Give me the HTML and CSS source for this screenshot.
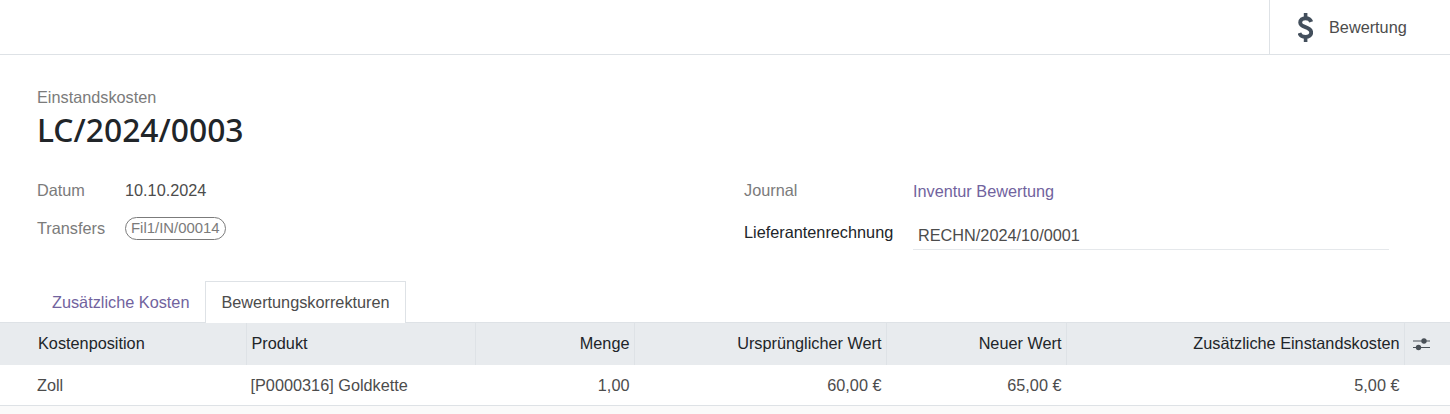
FILE: index.html
```html
<!DOCTYPE html>
<html lang="de">
<head>
  <meta charset="UTF-8" />
  <title>LC/2024/0003</title>
  <link rel="stylesheet" href="styles.css">
</head>
<body>
  <div class="button-box">
    <div class="stat-btn">
      <svg class="stat-icon" viewBox="0 0 15 29" width="15" height="29">
        <path d="M5.8 0h3.6v4h-3.6zM5.8 25h3.6v4h-3.6z" class="dollar-bar"/>
        <path d="M13.2 8.8C12.4 6.4 10.4 5.2 7.6 5.2 4.4 5.2 2.2 6.9 2.2 9.6c0 5.8 11 3.4 11 10 0 2.7-2.3 4.3-5.6 4.3-3.1 0-5.4-1.3-6.2-3.9" class="dollar-s"/>
      </svg>
      <span>Bewertung</span>
    </div>
  </div>

  <div class="sheet">
    <div class="title-label">Einstandskosten</div>
    <h1>LC/2024/0003</h1>

    <div class="groups">
      <div class="group group-left">
        <div class="field">
          <span class="label">Datum</span>
          <span class="value">10.10.2024</span>
        </div>
        <div class="field">
          <span class="label">Transfers</span>
          <span class="tag">Fil1/IN/00014</span>
        </div>
      </div>
      <div class="group group-right">
        <div class="field">
          <span class="label">Journal</span>
          <a class="link">Inventur Bewertung</a>
        </div>
        <div class="field field-input">
          <span class="label label-strong">Lieferantenrechnung</span>
          <div class="input">RECHN/2024/10/0001</div>
        </div>
      </div>
    </div>
  </div>

  <ul class="tabs">
    <li class="tab">Zusätzliche Kosten</li>
    <li class="tab active">Bewertungskorrekturen</li>
  </ul>

  <table class="lines">
    <colgroup>
      <col class="c-cost"><col class="c-product"><col class="c-qty"><col class="c-old"><col class="c-new"><col class="c-add"><col class="c-opt">
    </colgroup>
    <thead>
      <tr>
        <th>Kostenposition</th>
        <th>Produkt</th>
        <th class="num">Menge</th>
        <th class="num">Ursprünglicher Wert</th>
        <th class="num">Neuer Wert</th>
        <th class="num">Zusätzliche Einstandskosten</th>
        <th class="opt">
          <svg viewBox="0 0 17 14" width="17" height="14">
            <path d="M0 4h17M0 10.5h17" stroke="#495057" stroke-width="1.2"/>
            <circle cx="11" cy="4" r="2.7" fill="#495057"/>
            <circle cx="5.5" cy="10.5" r="2.7" fill="#495057"/>
          </svg>
        </th>
      </tr>
    </thead>
    <tbody>
      <tr>
        <td>Zoll</td>
        <td>[P0000316] Goldkette</td>
        <td class="num">1,00</td>
        <td class="num">60,00 €</td>
        <td class="num">65,00 €</td>
        <td class="num">5,00 €</td>
        <td></td>
      </tr>
    </tbody>
  </table>
</body>
</html>
```

FILE: styles.css
```css
html, body {
  height: 100%;
}
body {
  margin: 0;
  background: #fafafa;
  font-family: "Liberation Sans", Arial, sans-serif;
  font-size: 16.27px;
  color: #4c4c4c;
  overflow: hidden;
}
.button-box {
  display: flex;
  justify-content: flex-end;
  height: 54px;
  padding-right: 21px;
  background: #fff;
  border-bottom: 1px solid #dee2e6;
}
.stat-btn {
  display: flex;
  align-items: center;
  width: 160px;
  box-sizing: border-box;
  padding-left: 28px;
  border-left: 1px solid #dee2e6;
}
.stat-icon {
  margin-right: 16px;
}
.dollar-bar {
  fill: #434f5c;
}
.dollar-s {
  fill: none;
  stroke: #434f5c;
  stroke-width: 3.9;
}
.sheet {
  background: #fff;
  padding: 34px 37px 0;
  height: 192px;
}
.title-label {
  color: #7b7b7b;
  line-height: 17px;
}
h1 {
  margin: 3px 0 0;
  font-family: "Noto Sans", sans-serif;
  font-size: 31.8px;
  line-height: 42px;
  font-weight: 500;
  color: #212529;
}
.groups {
  display: flex;
  margin-top: 20px;
}
.group-left {
  width: 707px;
}
.group-right {
  width: 645px;
}
.field {
  display: flex;
  align-items: center;
  height: 38px;
}
.label {
  color: #7b7b7b;
  width: 88px;
}
.group-right .label {
  width: 169px;
}
.label-strong {
  color: #212529;
}
.value {
  color: #4c4c4c;
}
.link {
  padding-top: 2px;
  color: #71639e;
}
.tag {
  padding: 0 5px;
  line-height: 21px;
  border: 1px solid #7b7b7b;
  border-radius: 12px;
  color: #7b7b7b;
  font-size: 14.9px;
}
.field-input {
  margin-top: 4px;
}
.input {
  flex: 1;
  box-sizing: border-box;
  height: 31px;
  line-height: 32px;
  padding-left: 5px;
  border-bottom: 1px solid #e5e8eb;
  margin-top: 4px;
}
.tabs {
  display: flex;
  margin: 0;
  padding: 0 0 0 36px;
  list-style: none;
  background: #fff;
  height: 41px;
  border-bottom: 1px solid #dee2e6;
}
.tab {
  height: 41px;
  box-sizing: border-box;
  padding: 0 15px;
  line-height: 40px;
  color: #71639e;
  border: 1px solid transparent;
  border-bottom: 0;
}
.tab.active {
  height: 42px;
  color: #4c4c4c;
  background: #fff;
  border-color: #dee2e6;
}
.lines {
  width: 100%;
  table-layout: fixed;
  border-collapse: collapse;
  background: #fff;
}
.c-cost { width: 246px; }
.c-product { width: 229px; }
.c-qty { width: 159px; }
.c-old { width: 252px; }
.c-new { width: 180px; }
.c-add { width: 338px; }
th {
  height: 40px;
  padding: 0 4px 2px;
  background: #e8ebee;
  color: #212529;
  font-weight: 400;
  text-align: left;
  border-left: 1px solid #dee2e6;
}
th:first-child {
  border-left: 0;
  padding-left: 38px;
}
th:nth-child(2) {
  padding-left: 5px;
}
td {
  height: 40px;
  padding: 0 4px;
  border-bottom: 1px solid #dee2e6;
  border-left: 1px solid transparent;
}
td:first-child {
  border-left: 0;
  padding-left: 37px;
}
.num {
  text-align: right;
}
th.opt {
  text-align: left;
  padding: 0 0 0 8px;
}
.opt svg {
  display: block;
}
```
